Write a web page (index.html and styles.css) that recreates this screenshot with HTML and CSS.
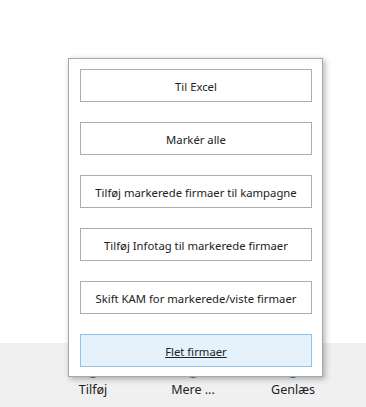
FILE: index.html
```html
<!DOCTYPE html>
<html lang="da">
<head>
    <meta charset="UTF-8">
    <meta name="viewport" content="width=device-width, initial-scale=1.0">
    <title>Firmaer</title>
    <link rel="stylesheet" href="styles.css">
</head>
<body>

    <div class="page">
        <div class="content"></div>

        <!-- Bottom command bar -->
        <div class="commandBar">
            <div class="command">
                <span class="commandIcon"></span>
                <span class="commandLabel">Tilføj</span>
            </div>
            <div class="command">
                <span class="commandIcon"></span>
                <span class="commandLabel">Mere ...</span>
            </div>
            <div class="command">
                <span class="commandIcon"></span>
                <span class="commandLabel">Genlæs</span>
            </div>
        </div>

        <!-- More menu popup -->
        <div class="menuPopup">
            <button class="menuButton">Til Excel</button>
            <button class="menuButton">Markér alle</button>
            <button class="menuButton">Tilføj markerede firmaer til kampagne</button>
            <button class="menuButton">Tilføj Infotag til markerede firmaer</button>
            <button class="menuButton">Skift KAM for markerede/viste firmaer</button>
            <button class="menuButton focused">Flet firmaer</button>
        </div>
    </div>

</body>
</html>
```

FILE: styles.css
```css
body {
    margin: 0;
    padding: 0;
    font-family: "Noto Sans", "Open Sans", sans-serif;
    font-size: 11.3px;
    color: #222;
    background: #fff;
}

.page {
    position: relative;
    width: 366px;
    height: 407px;
    display: flex;
    flex-direction: column;
    overflow: hidden;
}

.content {
    height: 343px;
}

.commandBar {
    flex: 1;
    background-color: #f0f0f0;
    display: grid;
    grid-template-columns: 100px 100px 100px;
    padding-left: 43px;
}

.command {
    display: flex;
    flex-direction: column;
    align-items: center;
}

.commandIcon {
    width: 20px;
    height: 20px;
    margin-top: 15px;
    border: 2px solid #0078d4;
    border-radius: 50%;
    box-sizing: border-box;
}

.commandLabel {
    margin-top: 3px;
    font-size: 12.5px;
    line-height: 17px;
}

.menuPopup {
    position: absolute;
    left: 68px;
    top: 58px;
    width: 232px;
    padding: 10px 10px 9px 11px;
    background: #fff;
    border: 1px solid #a8a8a8;
    box-shadow: 2px 2px 6px rgba(0, 0, 0, 0.3);
    display: flex;
    flex-direction: column;
    gap: 20px;
}

.menuButton {
    height: 33px;
    margin: 0;
    padding: 2px 0 0;
    font-family: inherit;
    font-size: 11.3px;
    color: #222;
    background: #fff;
    border: 1px solid #adadad;
}

.menuButton.focused {
    background-color: #e5f1fb;
    border-color: #92c2e8;
    text-decoration: underline;
}
```
